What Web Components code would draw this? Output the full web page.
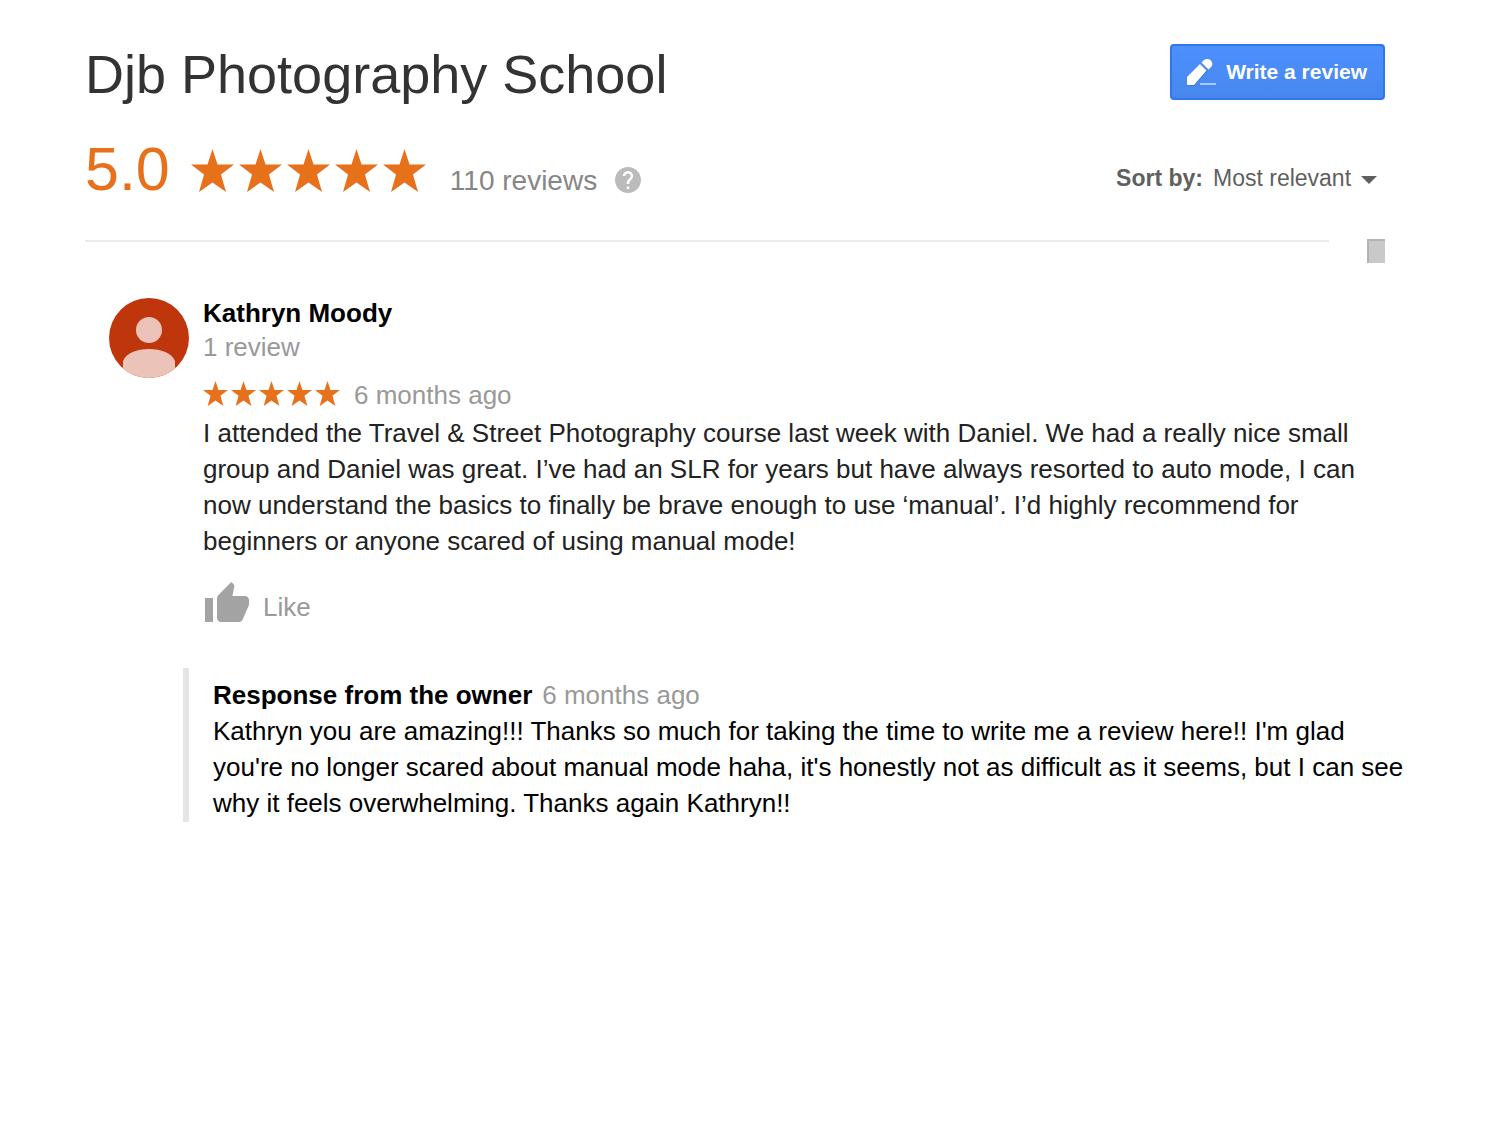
<!DOCTYPE html>
<html lang="en">
<head>
<meta charset="utf-8">
<meta name="viewport" content="width=device-width, initial-scale=1">
<title>Djb Photography School</title>
<style>
body {
  margin: 0;
  background-color: white;
  color: black;
  font-family: "Liberation Sans", Arial, sans-serif;
  font-size: 26px;
  line-height: 36px;
}
</style>
</head>
<body>
<reviews-page>
  <place-header slot="header" score="5.0" count="110">
    Djb Photography School
    <write-button slot="action">Write a review</write-button>
    <sort-menu slot="sort"></sort-menu>
  </place-header>
  <user-review stars="5">
    <span slot="name">Kathryn Moody</span>
    <span slot="total">1 review</span>
    <span slot="date">6 months ago</span>
    I attended the Travel &amp; Street Photography course last week with Daniel. We had a really nice small group and Daniel was great. I’ve had an SLR for years but have always resorted to auto mode, I can now understand the basics to finally be brave enough to use ‘manual’. I’d highly recommend for beginners or anyone scared of using manual mode!
    <owner-response slot="response">
      <span slot="date">6 months ago</span>
      Kathryn you are amazing!!! Thanks so much for taking the time to write me a review here!! I'm glad you're no longer scared about manual mode haha, it's honestly not as difficult as it seems, but I can see why it feels overwhelming. Thanks again Kathryn!!
    </owner-response>
  </user-review>
</reviews-page>

<script>
function createTemplate(content) {
  let template = document.createElement("template");
  template.innerHTML = content;
  return template;
}

class BaseElement extends HTMLElement {
  constructor() {
    super();
    this.attachShadow({ mode: "open" })
    this.shadowRoot.appendChild(this.constructor.template.content.cloneNode(true))
  }
}

class ReviewsPage extends BaseElement {
  static template = createTemplate(`
<style>
:host {
  display: block;
  padding: 44px 93px 44px 85px;
}
.top {
  margin-right: 22px;
}
.divider {
  display: flex;
  justify-content: space-between;
  gap: 38px;
  margin-top: 34px;
  margin-bottom: 32px;
}
hr {
  flex: 1;
  height: 2px;
  margin: 1px 0 0;
  border: none;
  background-color: #ebebeb;
}
/* top end of the scroll thumb */
.thumb {
  box-sizing: border-box;
  width: 18px;
  height: 24px;
  background-color: #c9c9c9;
  border-top: 2px solid #b3b3b3;
  border-left: 2px solid #b3b3b3;
}
</style>
<div class="top">
  <slot name="header"></slot>
  <div class="divider"><hr><div class="thumb"></div></div>
</div>
<main><slot></slot></main>`);
}
window.customElements.define("reviews-page", ReviewsPage);

class StarRating extends BaseElement {
  static template = createTemplate(`
<style>
:host {
  display: inline-flex;
  gap: var(--star-gap, 3px);
}
svg {
  display: block;
  width: var(--star-size, 25px);
  height: var(--star-size, 25px);
  fill: #e7711b;
}
</style>`);

  connectedCallback() {
    const value = Number(this.getAttribute("value"));
    this.setAttribute("role", "img")
    this.setAttribute("aria-label", value + " out of 5")
    for (let i = 0; i < value; i++) {
      this.shadowRoot.appendChild(StarRating.star.content.cloneNode(true))
    }
  }

  static star = createTemplate(`
<svg viewBox="0 0 43 43"><path d="M21.500 0 26.500 15.500H43L30 25.500 35 43 21.500 33.500 8 43 13 25.500 0 15.500H16.500Z"/></svg>`);
}
window.customElements.define("star-rating", StarRating);

class PlaceHeader extends BaseElement {
  static template = createTemplate(`
<style>
:host {
  display: block;
}
.row {
  display: flex;
  justify-content: space-between;
  align-items: flex-start;
}
h1 {
  margin: 0;
  font-size: 54px;
  font-weight: normal;
  line-height: 60px;
  color: #333;
}
.summary {
  align-items: flex-end;
  margin-top: 29px;
}
.rating {
  display: flex;
  align-items: flex-end;
  color: #e7711b;
}
.score {
  font-size: 61px;
  line-height: 72px;
}
star-rating {
  --star-size: 43px;
  --star-gap: 5px;
  margin-left: 21px;
  padding-bottom: 13px;
}
.count {
  margin-left: 24px;
  padding-bottom: 6px;
  font-size: 28px;
  color: #868686;
}
.help {
  margin-left: 18px;
  margin-bottom: 12px;
  padding: 0;
  border: none;
  background: none;
  cursor: pointer;
}
.help svg {
  display: block;
  width: 26px;
  height: 26px;
  fill: #bbb;
}
.sort {
  padding-bottom: 11px;
}
</style>
<div class="row">
  <h1><slot></slot></h1>
  <slot name="action"></slot>
</div>
<div class="row summary">
  <div class="rating">
    <span class="score"></span>
    <star-rating value="5"></star-rating>
    <span class="count"></span>
    <button class="help" aria-label="About reviews">
      <svg viewBox="2 2 20 20"><path d="M12 2C6.480 2 2 6.480 2 12s4.480 10 10 10 10-4.480 10-10S17.520 2 12 2zm1 17h-2v-2h2v2zm2.070-7.750l-.9.920C13.450 12.900 13 13.500 13 15h-2v-.5c0-1.100.45-2.100 1.170-2.830l1.240-1.260c.37-.36.590-.86.590-1.410 0-1.100-.9-2-2-2s-2 .9-2 2H8c0-2.210 1.790-4 4-4s4 1.790 4 4c0 .88-.36 1.680-.93 2.250z"/></svg>
    </button>
  </div>
  <div class="sort"><slot name="sort"></slot></div>
</div>`);

  connectedCallback() {
    this.shadowRoot.querySelector(".score").textContent = this.getAttribute("score")
    this.shadowRoot.querySelector(".count").textContent = this.getAttribute("count") + " reviews"
  }
}
window.customElements.define("place-header", PlaceHeader);

class WriteButton extends BaseElement {
  static template = createTemplate(`
<style>
:host {
  display: block;
}
button {
  display: flex;
  align-items: center;
  gap: 10px;
  height: 56px;
  padding: 0 16px 0 14px;
  border: 2px solid #2f77ee;
  border-radius: 4px;
  background: linear-gradient(#4d90fe, #4787ed);
  color: white;
  font: bold 21px "Liberation Sans", Arial, sans-serif;
  white-space: nowrap;
  cursor: pointer;
}
svg {
  width: 30px;
  height: 28px;
}
</style>
<button>
  <svg viewBox="0 0 30 28">
    <path d="M1 28V20L15 6L22 13L8 28Z" fill="#3869bd" opacity=".5"/>
    <path d="M1 27V19L14 6L20.500 12.500L8 27Z" fill="white"/>
    <path d="M15.500 4.500L18 2C20 .6 23 .8 24.500 2.300C26.500 4.300 27 6.500 25.500 8.500L22.500 11.500Z" fill="white"/>
    <path d="M14 26H30" stroke="#a9c8fb" stroke-width="2"/>
  </svg>
  <slot></slot>
</button>`);
}
window.customElements.define("write-button", WriteButton);

class SortMenu extends BaseElement {
  static template = createTemplate(`
<style>
:host {
  display: flex;
  align-items: center;
  gap: 10px;
  font-size: 23px;
  line-height: 32px;
  color: #5f5f5f;
}
label {
  font-weight: bold;
}
.field {
  display: grid;
  align-items: center;
}
select, svg {
  grid-area: 1 / 1;
}
select {
  appearance: none;
  margin: 0;
  padding: 0 33px 0 0;
  border: none;
  background: none;
  color: inherit;
  font: inherit;
  cursor: pointer;
}
svg {
  justify-self: end;
  width: 16px;
  height: 8px;
  margin-right: 8px;
  margin-top: 4px;
  fill: #5f5f5f;
  pointer-events: none;
}
</style>
<label for="sort">Sort by:</label>
<div class="field">
  <select id="sort"><option>Most relevant</option></select>
  <svg viewBox="0 0 16 8"><path d="M0 0H16L8 8Z"/></svg>
</div>`);
}
window.customElements.define("sort-menu", SortMenu);

class UserReview extends BaseElement {
  static template = createTemplate(`
<style>
:host {
  display: block;
}
article {
  display: flex;
  gap: 14px;
  margin-left: 24px;
}
.avatar {
  flex: none;
  width: 80px;
  height: 80px;
  margin-top: 3px;
}
h2 {
  margin: 0;
  font-size: 26px;
  line-height: 36px;
}
.total, .date {
  color: #999;
}
.total {
  line-height: 32px;
}
.meta {
  display: flex;
  align-items: center;
  gap: 14px;
  margin-top: 14px;
}
star-rating {
  padding-bottom: 4px;
}
p {
  margin: 2px 0 0;
  color: #222;
}
.like {
  display: flex;
  align-items: flex-end;
  gap: 14px;
  margin-top: 23px;
  padding: 0 0 0 2px;
  border: none;
  background: none;
  color: #999;
  font: inherit;
  cursor: pointer;
}
.like svg {
  width: 44px;
  height: 40px;
  margin-bottom: 3px;
  fill: #a3a3a3;
}
.response {
  margin-top: 43px;
  margin-left: 98px;
}
</style>
<article>
  <svg class="avatar" viewBox="0 0 80 80">
    <clipPath id="round"><circle cx="40" cy="40" r="40"/></clipPath>
    <g clip-path="url(#round)">
      <rect width="80" height="80" fill="#bf360c"/>
      <circle cx="40" cy="32" r="13" fill="#ebc3b8"/>
      <path d="M14 80V63C17 55 28 51 40 51S63 55 66 63V80Z" fill="#ebc3b8"/>
    </g>
  </svg>
  <div>
    <h2><slot name="name"></slot></h2>
    <div class="total"><slot name="total"></slot></div>
    <div class="meta">
      <star-rating></star-rating>
      <span class="date"><slot name="date"></slot></span>
    </div>
    <p><slot></slot></p>
    <button class="like">
      <svg viewBox="1 1 22 20"><path d="M1 21h4V9H1v12zm22-11c0-1.100-.9-2-2-2h-6.310l.95-4.570.03-.32c0-.41-.17-.79-.44-1.060L14.170 1 7.590 7.590C7.220 7.950 7 8.450 7 9v10c0 1.100.9 2 2 2h9c.83 0 1.540-.5 1.840-1.220l3.020-7.050c.09-.23.14-.47.14-.73v-2z"/></svg>
      Like
    </button>
  </div>
</article>
<div class="response"><slot name="response"></slot></div>`);

  connectedCallback() {
    let $stars = this.shadowRoot.querySelector("star-rating");
    $stars.replaceWith(this.createStars())
  }

  createStars() {
    let $stars = document.createElement("star-rating");
    $stars.setAttribute("value", this.getAttribute("stars"))
    return $stars;
  }
}
window.customElements.define("user-review", UserReview);

class OwnerResponse extends BaseElement {
  static template = createTemplate(`
<style>
:host {
  display: block;
  padding: 9px 0 1px 24px;
  border-left: 6px solid #e5e5e5;
}
.head {
  display: flex;
  gap: 10px;
}
h3 {
  margin: 0;
  font-size: 26px;
}
.date {
  color: #999;
}
p {
  margin: 0;
}
</style>
<div class="head">
  <h3>Response from the owner</h3>
  <span class="date"><slot name="date"></slot></span>
</div>
<p><slot></slot></p>`);
}
window.customElements.define("owner-response", OwnerResponse);
</script>
</body>
</html>
